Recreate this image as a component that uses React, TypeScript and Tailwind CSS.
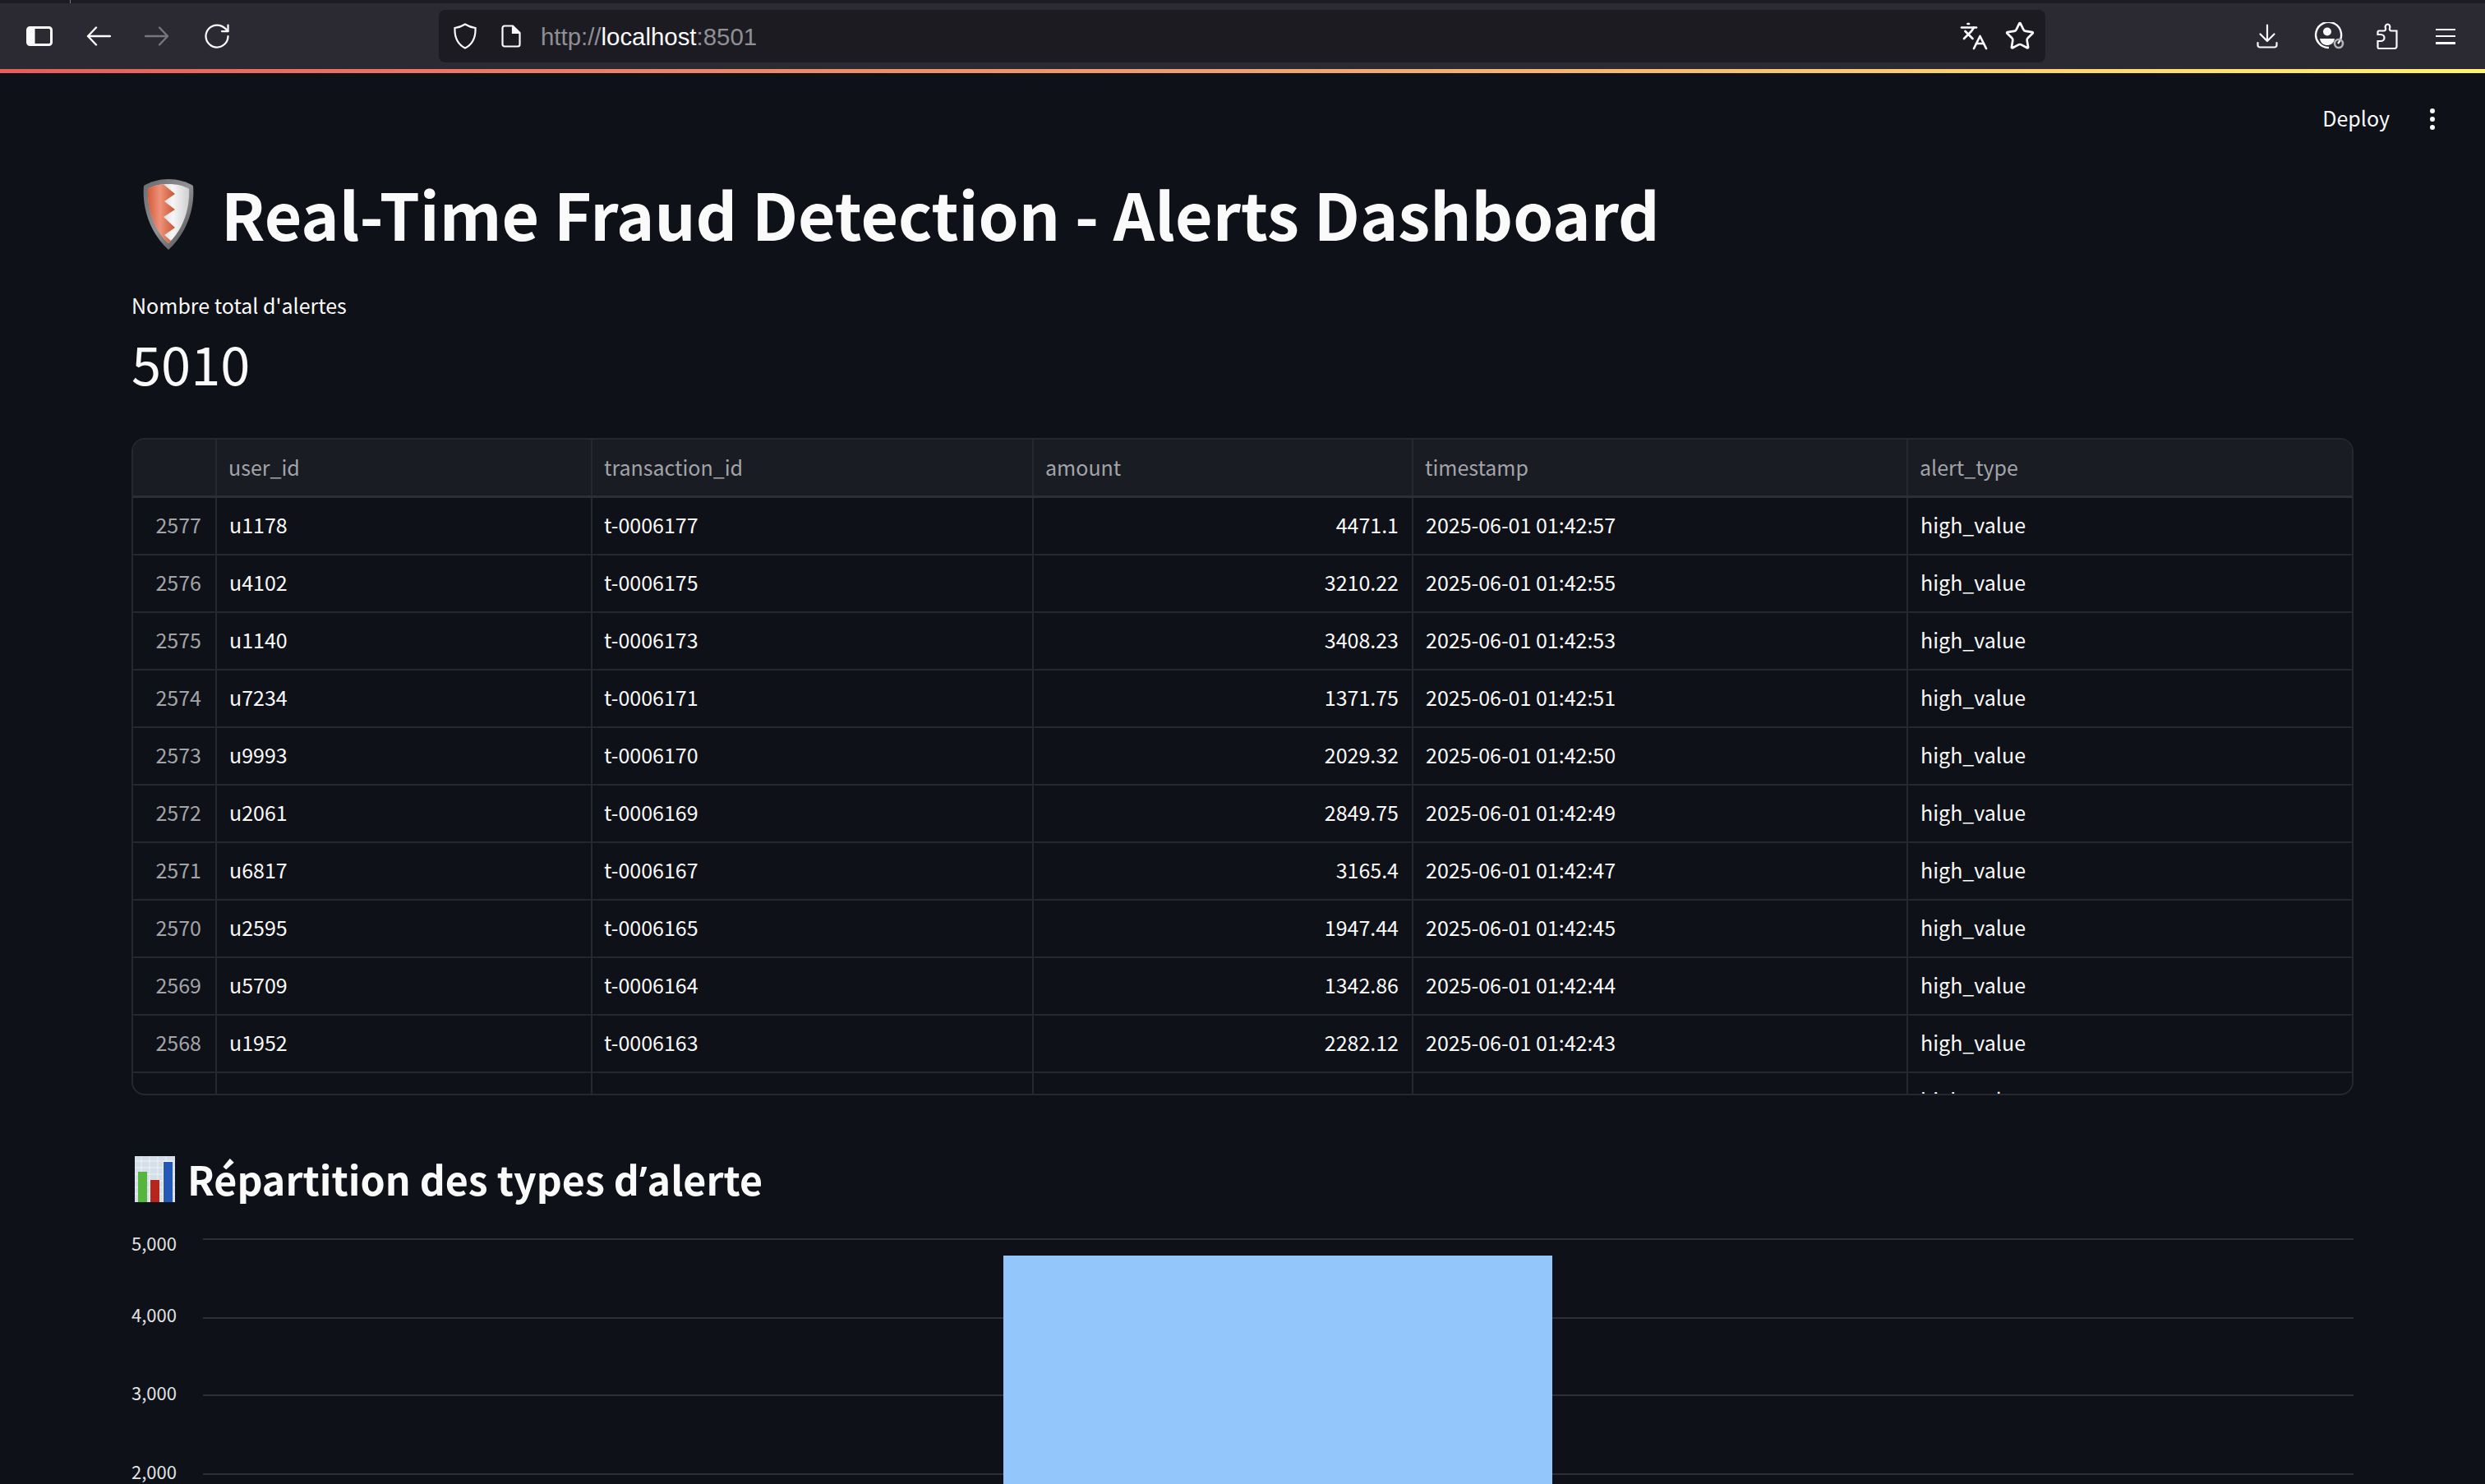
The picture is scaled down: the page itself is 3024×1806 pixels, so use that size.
import React from 'react';
import { RotateCw, Star, Languages } from 'lucide-react';

const rows = [
  ['2577', 'u1178', 't-0006177', '4471.1', '2025-06-01 01:42:57'],
  ['2576', 'u4102', 't-0006175', '3210.22', '2025-06-01 01:42:55'],
  ['2575', 'u1140', 't-0006173', '3408.23', '2025-06-01 01:42:53'],
  ['2574', 'u7234', 't-0006171', '1371.75', '2025-06-01 01:42:51'],
  ['2573', 'u9993', 't-0006170', '2029.32', '2025-06-01 01:42:50'],
  ['2572', 'u2061', 't-0006169', '2849.75', '2025-06-01 01:42:49'],
  ['2571', 'u6817', 't-0006167', '3165.4', '2025-06-01 01:42:47'],
  ['2570', 'u2595', 't-0006165', '1947.44', '2025-06-01 01:42:45'],
  ['2569', 'u5709', 't-0006164', '1342.86', '2025-06-01 01:42:44'],
  ['2568', 'u1952', 't-0006163', '2282.12', '2025-06-01 01:42:43'],
  ['2567', 'u3047', 't-0006162', '2774.84', '2025-06-01 01:42:42'],
];

const gridCols = 'grid grid-cols-[102px_457px_537px_462px_602px_1fr]';

const ShieldEmoji = () => (
  <svg width="62" height="86" viewBox="0 0 62 86" className="shrink-0">
    <defs>
      <linearGradient id="rim" x1="0" y1="0" x2="1" y2="1">
        <stop offset="0" stopColor="#6a6a6c" />
        <stop offset="0.5" stopColor="#929294" />
        <stop offset="1" stopColor="#47474a" />
      </linearGradient>
      <linearGradient id="red" x1="0" y1="0" x2="1" y2="0">
        <stop offset="0" stopColor="#d55c3c" />
        <stop offset="0.45" stopColor="#ee9279" />
        <stop offset="1" stopColor="#c95534" />
      </linearGradient>
      <linearGradient id="steel" x1="0" y1="0" x2="1" y2="0">
        <stop offset="0" stopColor="#b0b0b2" />
        <stop offset="0.6" stopColor="#f6f6f6" />
        <stop offset="1" stopColor="#cfcfd1" />
      </linearGradient>
    </defs>
    <path d="M31 0 C42 0 53 3 61 8 C63 30 57 62 31 86 C5 62 -1 30 1 8 C9 3 20 0 31 0 Z" fill="url(#rim)" />
    <path d="M31 6 C41 6 50 8 56 12 C57 31 52 58 31 78 C10 58 5 31 6 12 C12 8 21 6 31 6 Z" fill="url(#steel)" />
    <path d="M25 6.6 L39 18 L26 27 L39 37 L25 46 L39 59 L26 68 L34 75 L31 78 C10 58 5 31 6 12 C12 8 18 7 25 6.6 Z" fill="url(#red)" />
  </svg>
);

const ChartEmoji = () => (
  <svg width="49" height="56" viewBox="0 0 49 56" className="shrink-0">
    <rect width="49" height="56" fill="#d4dfe9" />
    <g stroke="#eef3f7" strokeWidth="1">
      <line x1="0" x2="49" y1="6" y2="6" />
      <line x1="0" x2="49" y1="14" y2="14" />
      <line x1="0" x2="49" y1="22" y2="22" />
      <line x1="0" x2="49" y1="30" y2="30" />
      <line x1="0" x2="49" y1="38" y2="38" />
      <line x1="0" x2="49" y1="46" y2="46" />
      <line x1="8" x2="8" y1="0" y2="56" />
      <line x1="18" x2="18" y1="0" y2="56" />
      <line x1="28" x2="28" y1="0" y2="56" />
      <line x1="38" x2="38" y1="0" y2="56" />
    </g>
    <rect x="4" y="19" width="11" height="37" fill="#55b53c" />
    <rect x="19" y="29" width="11" height="27" fill="#b5261c" />
    <rect x="34" y="6" width="12" height="50" fill="#fafcff" />
    <rect x="35" y="7" width="11" height="49" fill="#2559b8" />
  </svg>
);

const SidebarIcon = () => (
  <svg width="32" height="24" viewBox="0 0 32 24">
    <rect x="1.5" y="1.5" width="29" height="21" rx="3" fill="none" stroke="#fbfbfe" strokeWidth="3" />
    <rect x="1.5" y="1.5" width="9" height="21" fill="#fbfbfe" />
  </svg>
);

const NavArrow = ({ back, color }: { back: boolean; color: string }) => (
  <svg width="30" height="24" viewBox="0 0 30 24" fill="none" stroke={color} strokeWidth="2.4" strokeLinecap="round" strokeLinejoin="round">
    {back ? <path d="M29 12 H2 M12 1.5 L2 12 L12 22.5" /> : <path d="M1 12 H28 M18 1.5 L28 12 L18 22.5" />}
  </svg>
);

const SiteShield = () => (
  <svg width="28" height="32" viewBox="0 0 28 32" fill="none" stroke="#fbfbfe" strokeWidth="2.2">
    <path d="M14 1.5 C18 4 22 5.5 26.5 6 C27 17 23 26 14 30.5 C5 26 1 17 1.5 6 C6 5.5 10 4 14 1.5 Z" />
  </svg>
);

const PageIcon = () => (
  <svg width="24" height="28" viewBox="0 0 24 28" fill="none" stroke="#fbfbfe" strokeWidth="2.2">
    <path d="M4 1.5 H14 L22.5 10 V24 A2.5 2.5 0 0 1 20 26.5 H4 A2.5 2.5 0 0 1 1.5 24 V4 A2.5 2.5 0 0 1 4 1.5 Z" />
    <path d="M14 1.5 V10 H22.5" fill="#fbfbfe" />
  </svg>
);

const DownloadIcon = () => (
  <svg width="26" height="30" viewBox="0 0 26 30" fill="none" stroke="#fbfbfe" strokeWidth="2.2" strokeLinecap="round" strokeLinejoin="round">
    <path d="M13 1.5 V21 M4.5 12.5 L13 21 L21.5 12.5" />
    <path d="M1.5 23 V26 A2.5 2.5 0 0 0 4 28.5 H22 A2.5 2.5 0 0 0 24.5 26 V23" />
  </svg>
);

const AccountIcon = () => (
  <svg width="38" height="34" viewBox="0 0 38 34">
    <path d="M29 26 A15.5 15.5 0 1 0 18 31" fill="none" stroke="#fbfbfe" strokeWidth="2.4" />
    <circle cx="16" cy="11.5" r="5" fill="#fbfbfe" />
    <path d="M7 20 H25 C24 26 20 28 16 28 C12 28 8 26 7 20 Z" fill="#fbfbfe" />
    <circle cx="30" cy="26" r="5" fill="none" stroke="#b4b4b8" strokeWidth="2.6" />
  </svg>
);

const PuzzleIcon = () => (
  <svg width="26" height="32" viewBox="0 0 26 32" fill="none" stroke="#fbfbfe" strokeWidth="2.2">
    <path d="M3 31 H22 A2.5 2.5 0 0 0 24.5 28.5 V9.5 H18 C16.5 9.5 15.5 8 16 6.5 C17 4 15.5 1.5 13.5 1.5 C11.5 1.5 10 4 11 6.5 C11.5 8 10.5 9.5 9 9.5 H3 A1.5 1.5 0 0 0 1.5 11 V14 H5 C8 14 9.5 16 9.5 18 C9.5 20 8 22 5 22 H1.5 V29.5 A1.5 1.5 0 0 0 3 31 Z" />
  </svg>
);

const App: React.FC = () => {
  return (
    <div className="h-[1806px] overflow-hidden bg-[#0e1117] font-['Noto_Sans_CJK_SC','Noto_Sans',sans-serif] text-[#fafafa]">
      {/* browser chrome */}
      <div className="h-1 bg-[#1c1b22] pl-[85px]">
        <div className="h-1 w-px bg-[#77767c]" />
      </div>
      <div className="flex h-20 items-center bg-[#2b2a33] pl-8 pr-9">
        <div className="flex items-center">
          <SidebarIcon />
          <div className="ml-[41px] flex"><NavArrow back color="#fbfbfe" /></div>
          <div className="ml-[41px] flex"><NavArrow back={false} color="#77767c" /></div>
          <RotateCw size={36} strokeWidth={1.5} color="#fbfbfe" className="ml-[40px]" />
        </div>
        <div className="ml-[252px] flex h-16 w-[1955px] items-center rounded-lg bg-[#1c1b22] pl-[18px] pr-3">
          <SiteShield />
          <div className="ml-[30px] flex"><PageIcon /></div>
          <span className="ml-[24px] pt-[2px] font-['Liberation_Sans',sans-serif] text-[29.4px] text-[#8f8f94]">
            http://<span className="text-[#fbfbfe]">localhost</span>:8501
          </span>
          <Languages size={36} strokeWidth={1.8} color="#fbfbfe" className="ml-auto" />
          <Star size={38} strokeWidth={1.7} color="#fbfbfe" className="ml-[19px]" />
        </div>
        <div className="ml-auto flex items-center">
          <DownloadIcon />
          <div className="ml-[44px] flex"><AccountIcon /></div>
          <div className="ml-[38px] flex"><PuzzleIcon /></div>
          <div className="ml-[46px] flex h-[19px] w-6 flex-col justify-between">
            <div className="h-[2.5px] bg-[#fbfbfe]" />
            <div className="h-[2.5px] bg-[#fbfbfe]" />
            <div className="h-[2.5px] bg-[#fbfbfe]" />
          </div>
        </div>
      </div>
      <div className="h-[5px] bg-gradient-to-r from-[#e85c5c] via-[#f0a070] to-[#fff36e]" />

      {/* streamlit header */}
      <div className="flex h-[112px] items-center justify-end pr-[61px]">
        <span className="pb-[3px] text-[25px] leading-none">Deploy</span>
        <div className="ml-[49px] flex flex-col gap-[4px]">
          <div className="h-[6px] w-[6px] rounded-full bg-[#fafafa]" />
          <div className="h-[6px] w-[6px] rounded-full bg-[#fafafa]" />
          <div className="h-[6px] w-[6px] rounded-full bg-[#fafafa]" />
        </div>
      </div>

      <div className="px-[160px]">
        <div className="mt-2 flex h-[103px] items-center">
          <div className="ml-[14px] flex"><ShieldEmoji /></div>
          <h1 className="ml-[33px] pb-[2px] text-[78.6px] font-bold leading-none">Real-Time Fraud Detection - Alerts Dashboard</h1>
        </div>

        <div className="mt-[39px] text-[25px] leading-[40px]">Nombre total d'alertes</div>
        <div className="mt-[5px] text-[65px] leading-[90px]">5010</div>

        {/* data table */}
        <div className="mt-[47px] h-[800px] overflow-hidden rounded-[16px] border-2 border-[#262730] text-[25px] leading-none">
          <div className={`${gridCols} h-[71px] border-b-[3px] border-[#2d2e37] bg-[#1a1c24] text-[#a3a4a8]`}>
            <div className="border-r-2 border-[#262730]" />
            {['user_id', 'transaction_id', 'amount', 'timestamp', 'alert_type'].map((h, i) => (
              <div key={h} className={`flex items-center px-[14px] pb-[2px] ${i < 4 ? 'border-r-2 border-[#262730]' : ''}`}>{h}</div>
            ))}
          </div>
          {rows.map((r) => (
            <div key={r[0]} className={`${gridCols} h-[70px] border-b-2 border-[#262730]`}>
              <div className="flex items-center justify-end border-r-2 border-[#262730] pr-[17px] pb-1 text-[#a3a4a8]">{r[0]}</div>
              <div className="flex items-center border-r-2 border-[#262730] px-[15px] pb-1">{r[1]}</div>
              <div className="flex items-center border-r-2 border-[#262730] px-[14px] pb-1">{r[2]}</div>
              <div className="flex items-center justify-end border-r-2 border-[#262730] px-4 pb-1">{r[3]}</div>
              <div className="flex items-center border-r-2 border-[#262730] px-[15px] pb-1">{r[4]}</div>
              <div className="flex items-center px-[15px] pb-1">high_value</div>
            </div>
          ))}
        </div>

        {/* chart section */}
        <div className="mt-[74px] flex h-[56px] items-center">
          <div className="ml-[4px] flex"><ChartEmoji /></div>
          <h3 className="ml-[15px] text-[48.3px] font-semibold leading-none">
            Répartition des types d<span className="font-['Noto_Sans',sans-serif]">’</span>alerte
          </h3>
        </div>
      </div>

      <svg width="2864" height="303" viewBox="0 0 2864 303" className="mt-[40px] block font-['Noto_Sans_CJK_SC','Noto_Sans',sans-serif]">
        <g stroke="#2c2e38" strokeWidth="2">
          <line x1="247" x2="2864" y1="5" y2="5" />
          <line x1="247" x2="2864" y1="101" y2="101" />
          <line x1="247" x2="2864" y1="195" y2="195" />
          <line x1="247" x2="2864" y1="291" y2="291" />
        </g>
        <rect x="1221" y="25" width="668" height="278" fill="#93c6fa" />
        <g fill="#fafafa" fontSize="22" textAnchor="end" opacity="0.9">
          <text x="215" y="19">5,000</text>
          <text x="215" y="106">4,000</text>
          <text x="215" y="201">3,000</text>
          <text x="215" y="297">2,000</text>
        </g>
      </svg>
    </div>
  );
};

export default App;
